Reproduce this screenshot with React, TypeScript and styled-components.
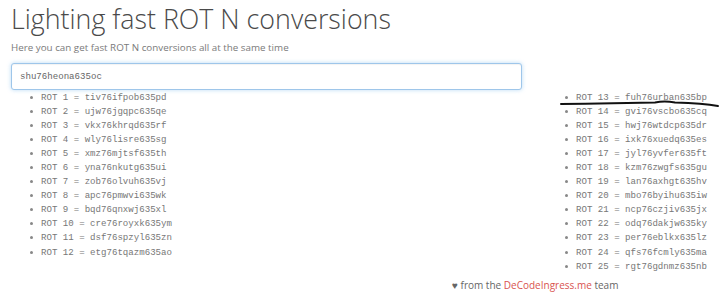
import styled, { createGlobalStyle } from "styled-components";

const GlobalStyle = createGlobalStyle`
  html, body {
    margin: 0;
    padding: 0;
    background: #ffffff;
  }
`;

const Page = styled.div`
  width: 720px;
  height: 295px;
  position: relative;
  overflow: hidden;
  font-family: "Open Sans", sans-serif;
  color: #555;
`;

const Header = styled.div`
  padding: 1px 0 0 11px;
`;

const Title = styled.h1`
  margin: 0;
  font-size: 26.8px;
  font-weight: 300;
  line-height: 36px;
  color: #4a4a4a;
`;

const Subtitle = styled.p`
  margin: 4px 0 0;
  font-size: 9.8px;
  line-height: 13px;
  color: #7a7a7a;
`;

const Input = styled.input`
  display: block;
  box-sizing: border-box;
  width: 511px;
  height: 27px;
  margin: 9px 0 0 11px;
  padding: 0 8px;
  border: 1px solid #9ec6ea;
  border-radius: 3px;
  box-shadow: 0 0 4px rgba(102, 175, 233, 0.45), inset 0 1px 1px rgba(0, 0, 0, 0.05);
  font-family: "Liberation Mono", monospace;
  font-size: 9.1px;
  color: #666;
  outline: none;
`;

const Columns = styled.div`
  display: grid;
  grid-template-columns: 535px 1fr;
  margin-top: 0;
`;

const List = styled.ul`
  margin: 0;
  padding: 0 0 0 ${(p: { $indent: number }) => p.$indent}px;
  list-style: none;
`;

const Item = styled.li`
  display: flex;
  align-items: center;
  height: 14.1px;
  font-family: "Liberation Mono", monospace;
  font-size: 9.1px;
  color: #777;
  white-space: pre;

  &::before {
    content: "";
    width: 3px;
    height: 3px;
    border-radius: 50%;
    background: #888;
    margin-right: 8px;
  }
`;

const Footer = styled.div`
  position: absolute;
  left: 452px;
  top: 278px;
  font-size: 10px;
  color: #666;
`;

const Link = styled.span`
  color: #d9534f;
`;

const Scribble = styled.svg`
  position: absolute;
  left: 555px;
  top: 98px;
`;

const rot = (s: string, n: number) =>
  s.replace(/[a-z]/g, (c) =>
    String.fromCharCode(((c.charCodeAt(0) - 97 + n) % 26) + 97)
  );

const source = "shu76heona635oc";
const rows = Array.from({ length: 25 }, (_, i) => i + 1);

const App = () => (
  <Page>
    <GlobalStyle />
    <Header>
      <Title>Lighting fast ROT N conversions</Title>
      <Subtitle>Here you can get fast ROT N conversions all at the same time</Subtitle>
    </Header>
    <Input value={source} readOnly />
    <Columns>
      <List $indent={30}>
        {rows.slice(0, 12).map((n) => (
          <Item key={n}>{`ROT ${n} = ${rot(source, n)}`}</Item>
        ))}
      </List>
      <List $indent={30}>
        {rows.slice(12).map((n) => (
          <Item key={n}>{`ROT ${n} = ${rot(source, n)}`}</Item>
        ))}
      </List>
    </Columns>
    <Scribble width="165" height="12" viewBox="0 0 165 12">
      <path
        d="M6 6 C40 5.5 80 5 100 4.5 C108 3 114 3.5 120 4.5 C140 5 155 6.5 163 8"
        fill="none"
        stroke="#111"
        strokeWidth="2"
        strokeLinecap="round"
      />
    </Scribble>
    <Footer>
      ♥ from the <Link>DeCodeIngress.me</Link> team
    </Footer>
  </Page>
);

export default App;
